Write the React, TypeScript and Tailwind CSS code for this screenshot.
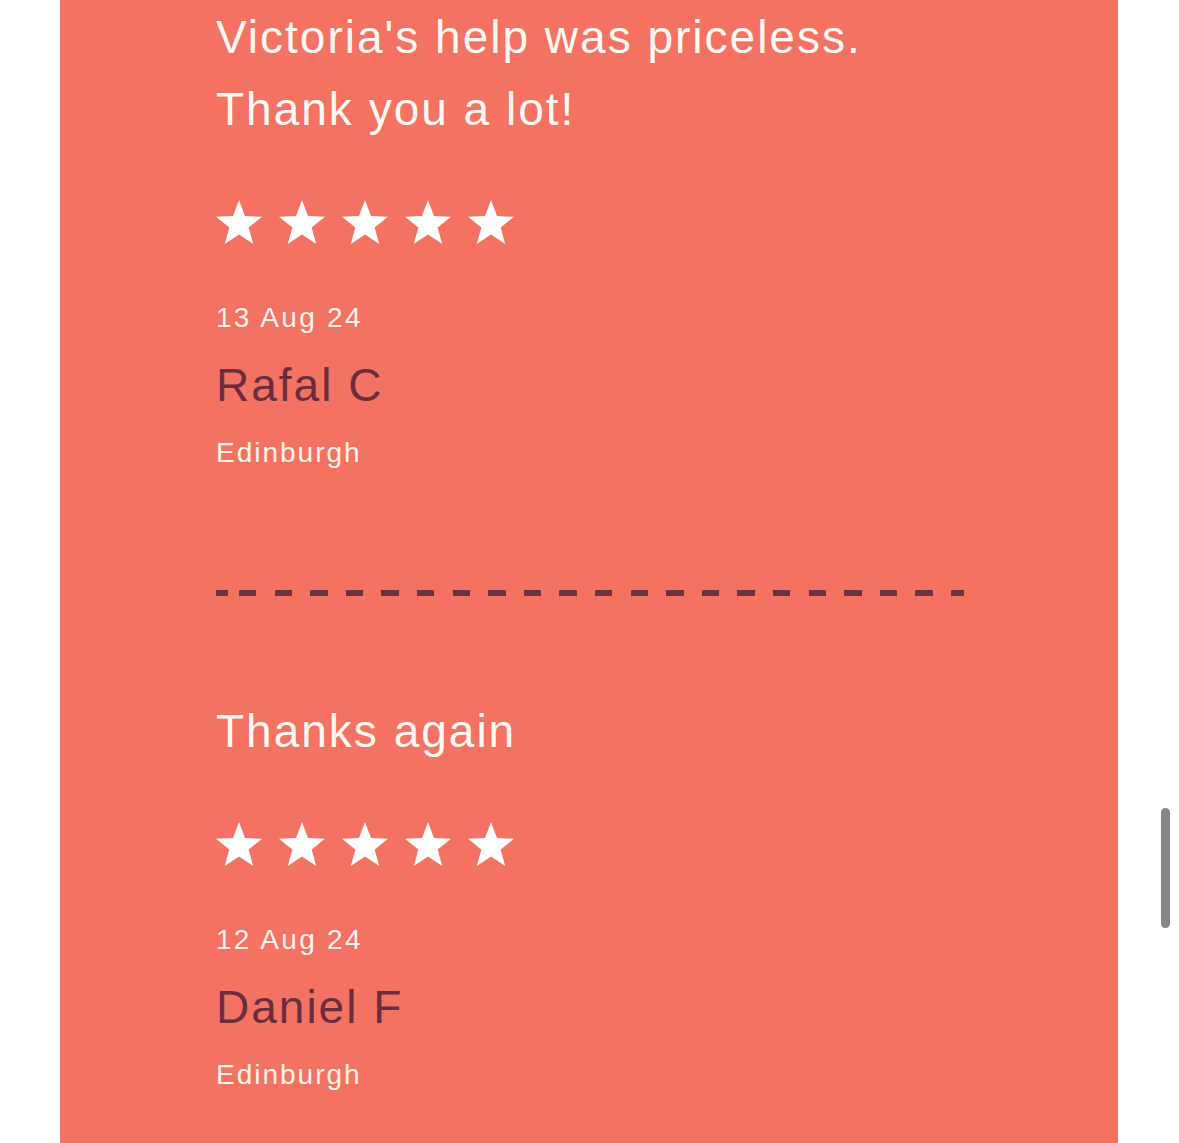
const reviews = [
  {
    text: ["Victoria's help was priceless.", "Thank you a lot!"],
    date: "13 Aug 24",
    name: "Rafal C",
    city: "Edinburgh",
  },
  {
    text: ["Thanks again"],
    date: "12 Aug 24",
    name: "Daniel F",
    city: "Edinburgh",
  },
];

const Star = () => (
  <svg viewBox="-0.951 -1 1.902 1.809" className="w-[46px] h-[44px]" fill="currentColor">
    <polygon points="0,-1 0.247,-0.34 0.951,-0.309 0.399,0.13 0.588,0.809 0,0.42 -0.588,0.809 -0.399,0.13 -0.951,-0.309 -0.247,-0.34" />
  </svg>
);

const Review = ({ review }: { review: (typeof reviews)[number] }) => (
  <div className="flex flex-col">
    <p className="text-[46px] leading-[72px] tracking-[2px] text-[#fff8f4]">
      {review.text.map((line) => (
        <span key={line} className="block">
          {line}
        </span>
      ))}
    </p>
    <div className="mt-[55px] flex gap-[17px] text-white">
      {[0, 1, 2, 3, 4].map((i) => (
        <Star key={i} />
      ))}
    </div>
    <div className="mt-[54px] text-[28px] leading-[40px] tracking-[2.3px] text-[#fff3ee]">{review.date}</div>
    <div className="mt-[19px] text-[46px] leading-[56px] tracking-[2px] text-[#6b2d3c]">{review.name}</div>
    <div className="mt-[20px] text-[28px] leading-[40px] tracking-[2px] text-[#fff3ee]">{review.city}</div>
  </div>
);

export default function App() {
  return (
    <div className="relative bg-white h-[1143px] overflow-hidden font-['Liberation_Sans',Arial,sans-serif]">
      <div className="mx-[60px] mr-[61px] h-full bg-[#f37262] pl-[156px] pt-px">
        <div className="w-[748px]">
          <Review review={reviews[0]} />
          {/* dashed divider */}
          <div className="mt-[117px] flex h-[6px]">
            <div className="w-[12px] bg-[#6b3340]" />
            <div className="ml-[11px] flex-1 bg-[repeating-linear-gradient(90deg,#6b3340_0_17.5px,transparent_17.5px_35.6px)]" />
          </div>
          <div className="mt-[99px]">
            <Review review={reviews[1]} />
          </div>
        </div>
      </div>
      {/* scroll indicator */}
      <div className="absolute left-[1161px] top-[808px] w-[9px] h-[120px] rounded-full bg-[#858585]" />
    </div>
  );
}
